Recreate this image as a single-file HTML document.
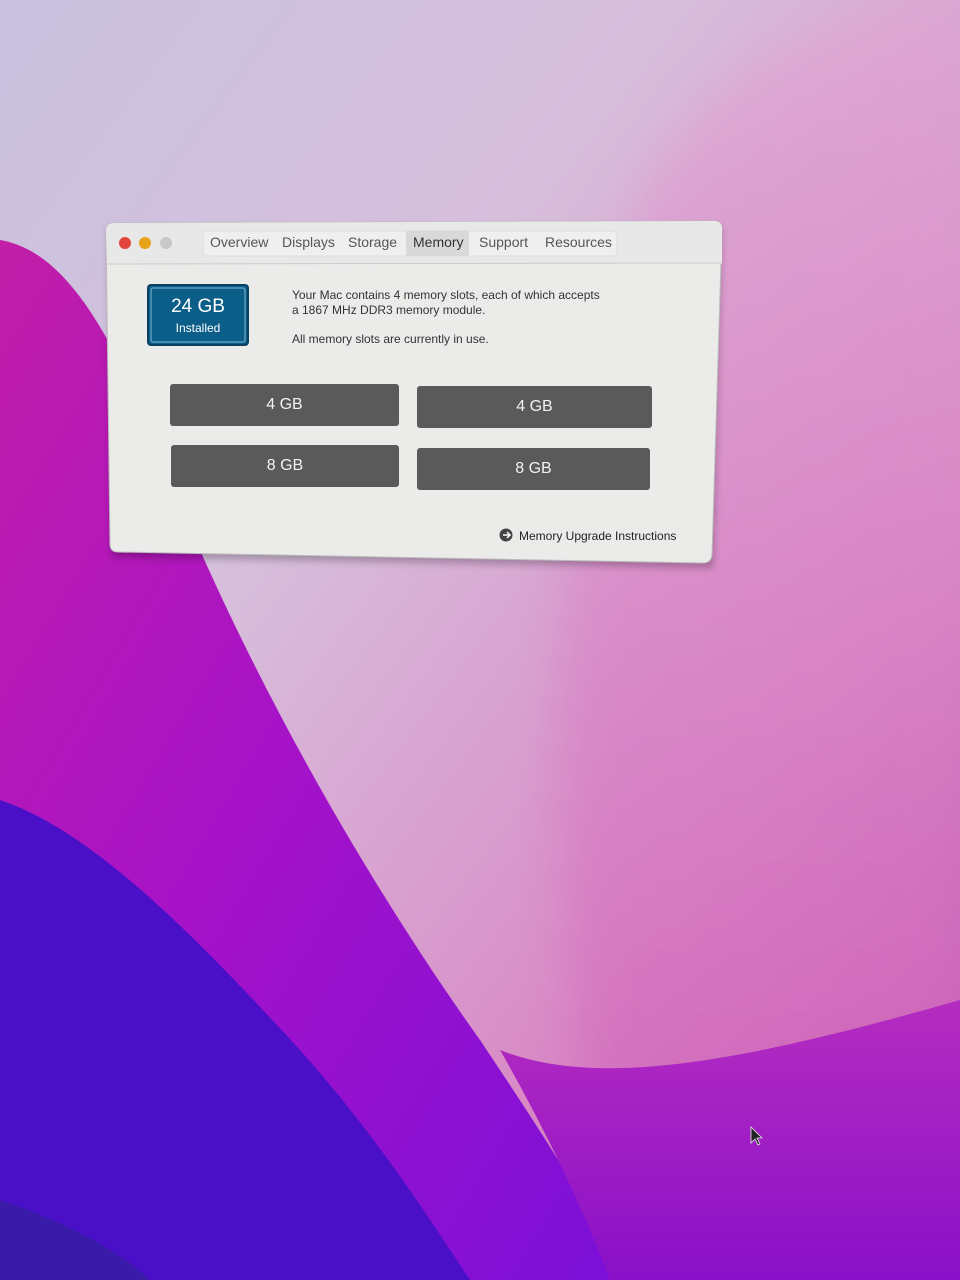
<!DOCTYPE html>
<html><head><style>
html,body{margin:0;padding:0;width:960px;height:1280px;overflow:hidden;font-family:"Liberation Sans",sans-serif}
.a{position:absolute}
.tab{position:absolute;top:234px;font-size:14px;color:#555}
.slot{position:absolute;background:#5a5a5a;color:#f2f2f2;font-size:16px;text-align:center;border-radius:3px}
</style></head><body>
<svg class="a" style="left:0;top:0" width="960" height="1280" viewBox="0 0 960 1280">
<defs>
<linearGradient id="bg" x1="0" y1="0" x2="1" y2="1">
<stop offset="0" stop-color="#c9c3df"/><stop offset="0.35" stop-color="#d7bfdc"/><stop offset="0.7" stop-color="#d98ac6"/><stop offset="1" stop-color="#c04fb0"/></linearGradient>
<linearGradient id="mag" x1="0" y1="0" x2="1" y2="1">
<stop offset="0" stop-color="#c21ea8"/><stop offset="0.5" stop-color="#a412c9"/><stop offset="1" stop-color="#7a10d8"/></linearGradient>
<linearGradient id="pk" x1="0" y1="0" x2="0" y2="1">
<stop offset="0" stop-color="#e3a4d2"/><stop offset="1" stop-color="#cf5cb8"/></linearGradient>
<linearGradient id="bot" x1="0" y1="0" x2="0" y2="1">
<stop offset="0" stop-color="#b52cc0"/><stop offset="1" stop-color="#8a10c8"/></linearGradient>
<filter id="bl"><feGaussianBlur stdDeviation="25"/></filter>
<filter id="sh"><feGaussianBlur stdDeviation="4"/></filter>
</defs>
<rect width="960" height="1280" fill="url(#bg)"/>
<path d="M640 200 C700 80 800 20 960 0 L960 1280 L600 1280 C560 900 520 600 640 200Z" fill="url(#pk)" opacity="0.6" filter="url(#bl)"/>
<path d="M0 240 C60 250 110 320 170 480 C260 700 380 900 480 1040 C540 1130 600 1220 620 1280 L0 1280Z" fill="url(#mag)"/>
<path d="M0 800 C90 830 190 930 300 1050 C380 1140 430 1220 470 1280 L0 1280Z" fill="#4a10c8"/>
<path d="M0 1200 C60 1220 120 1250 150 1280 L0 1280Z" fill="#3a1aa8"/>
<path d="M500 1050 C600 1090 750 1060 960 1000 L960 1280 L610 1280 C580 1200 540 1120 500 1050Z" fill="url(#bot)"/>
<path d="M108 228 L722 226 L713 568 L112 557Z" fill="#000" opacity="0.25" filter="url(#sh)"/>
<path d="M114 223 L714 221 Q722 221 722 229 L712 555 Q711 563 703 563 L118 552 Q110 552 110 544 L106 231 Q106 223 114 223Z" fill="#ebebea" stroke="#bbb" stroke-width="1"/>
<path d="M114 223 L714 221 Q722 221 722 229 L722 264 L107 264 L106 231 Q106 223 114 223Z" fill="#e8e8e8"/>
<line x1="107" y1="264" x2="722" y2="263" stroke="#ccc"/>
<circle cx="125" cy="243" r="6" fill="#e0443a"/>
<circle cx="145" cy="243" r="6" fill="#e8a21a"/>
<circle cx="166" cy="243" r="6" fill="#c8c8c8"/>
<rect x="203" y="231" width="414" height="25" rx="3" fill="#efefef" stroke="#ddd"/>
<rect x="406" y="231" width="63" height="25" fill="#d9d9d9"/>
<rect x="148" y="285" width="100" height="60" rx="3" fill="#0b5e88" stroke="#0a4060" stroke-width="2"/>
<rect x="151" y="288" width="94" height="54" rx="2" fill="none" stroke="#7fb8d8" stroke-width="1"/>
<circle cx="506" cy="535" r="6.5" fill="#444"/>
<path d="M503 535 H509 M507 532 L510 535 L507 538" stroke="#fff" stroke-width="1.5" fill="none"/>
<path d="M751 1127 L751 1143 L755 1139 L758 1145 L760 1144 L757 1138 L762 1138Z" fill="#222" stroke="#eee" stroke-width="0.8"/>
</svg>
<div class="tab" style="left:210px">Overview</div>
<div class="tab" style="left:282px">Displays</div>
<div class="tab" style="left:348px">Storage</div>
<div class="tab" style="left:413px;color:#333">Memory</div>
<div class="tab" style="left:479px">Support</div>
<div class="tab" style="left:545px">Resources</div>
<div class="a" style="left:148px;top:296px;width:100px;text-align:center;color:#fff;font-size:19px">24 GB</div>
<div class="a" style="left:148px;top:321px;width:100px;text-align:center;color:#fff;font-size:12px">Installed</div>
<div class="a" style="left:292px;top:288px;font-size:12px;color:#333;line-height:15px">Your Mac contains 4 memory slots, each of which accepts<br>a 1867 MHz DDR3 memory module.</div>
<div class="a" style="left:292px;top:332px;font-size:12px;color:#333">All memory slots are currently in use.</div>
<div class="slot" style="left:170px;top:384px;width:229px;height:42px;line-height:42px">4 GB</div>
<div class="slot" style="left:417px;top:386px;width:235px;height:42px;line-height:42px">4 GB</div>
<div class="slot" style="left:171px;top:445px;width:228px;height:42px;line-height:42px">8 GB</div>
<div class="slot" style="left:417px;top:448px;width:233px;height:42px;line-height:42px">8 GB</div>
<div class="a" style="left:519px;top:529px;font-size:12px;color:#222">Memory Upgrade Instructions</div>
</body></html>
